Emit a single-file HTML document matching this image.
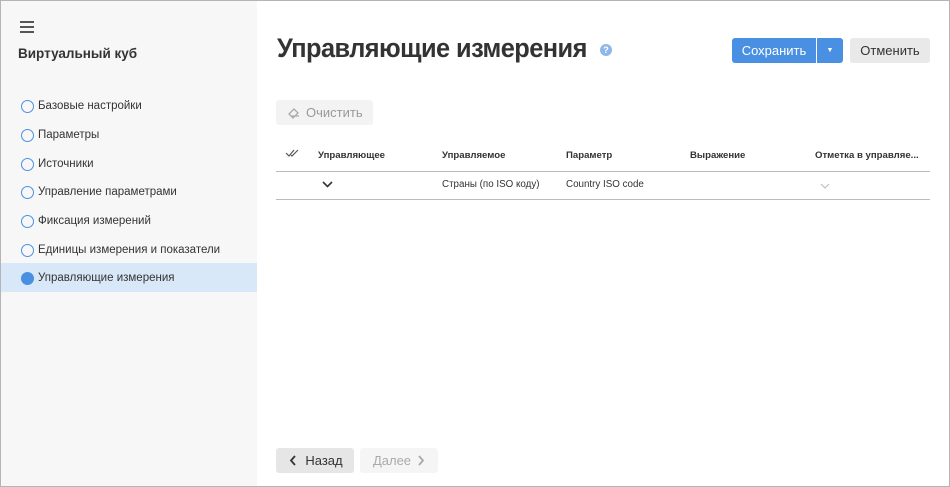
<!DOCTYPE html>
<html><head><meta charset="utf-8"><style>
*{box-sizing:border-box;margin:0;padding:0}
body{width:950px;height:487px;overflow:hidden;font-family:"Liberation Sans",sans-serif;color:#333;background:#fff}
.frame{position:absolute;left:0;top:0;width:950px;height:487px;border:1px solid #b4b4b4}
.side{position:absolute;left:1px;top:1px;width:256px;height:485px;background:#f7f7f7}
.burger{position:absolute;left:19px;top:20px;width:14px}
.burger i{display:block;height:2px;background:#555;margin-bottom:3px}
.stitle{position:absolute;left:17px;top:45px;font-size:13.5px;font-weight:bold;color:#333}
.item{position:absolute;left:0;width:256px;height:29px;font-size:11.5px;color:#333;line-height:31px;padding-left:37px}
.item:before{content:"";position:absolute;left:20px;top:9px;width:11px;height:11px;border:1.3px solid #4a90e2;border-radius:50%}
.item.act{background:#d9e8f9}
.item.act:before{background:#4a90e2}
h1{position:absolute;left:277px;top:33px;font-size:27px;font-weight:bold;color:#333;letter-spacing:-0.6px;transform:scaleX(0.94);transform-origin:left}
.help{position:absolute;left:600px;top:44px;width:12px;height:12px;border-radius:50%;background:#8fb8ea;color:#fff;font-size:9px;font-weight:bold;text-align:center;line-height:12px}
.btn{position:absolute;height:25px;font-size:13px;line-height:25px;text-align:center;border-radius:3px}
.save{left:732px;top:38px;width:84px;background:#4a90e2;color:#fff;border-radius:3px 0 0 3px}
.dd{left:817px;top:38px;width:26px;background:#4a90e2;color:#fff;font-size:7px;border-radius:0 3px 3px 0}
.cancel{left:850px;top:38px;width:80px;background:#e9e9e9;color:#333}
.clear{left:276px;top:100px;width:97px;background:#f3f3f3;color:#999;text-align:left;padding-left:30px}
.th{position:absolute;top:150px;font-size:9.6px;font-weight:bold;color:#333}
.td{position:absolute;top:179px;font-size:9.8px;color:#333}
.line{position:absolute;left:276px;width:654px;height:1px;background:#bbb}
.back{left:276px;top:448px;width:78px;background:#e6e6e6;color:#333;padding-left:18px}
.next{left:360px;top:448px;width:78px;background:#f5f5f5;color:#aaa;padding-right:14px}
</style></head><body>
<div class="side">
<div class="burger"><i></i><i></i><i></i></div>
<div class="stitle">Виртуальный куб</div>
<div class="item" style="top:90px">Базовые настройки</div>
<div class="item" style="top:119px">Параметры</div>
<div class="item" style="top:148px">Источники</div>
<div class="item" style="top:176px">Управление параметрами</div>
<div class="item" style="top:205px">Фиксация измерений</div>
<div class="item" style="top:234px">Единицы измерения и показатели</div>
<div class="item act" style="top:262px">Управляющие измерения</div>
</div>
<h1>Управляющие измерения</h1>
<div class="help">?</div>
<div class="btn save">Сохранить</div>
<div class="btn dd">▼</div>
<div class="btn cancel">Отменить</div>
<div class="btn clear"><svg style="position:absolute;left:11px;top:6px" width="13" height="13" viewBox="0 0 13 13"><path d="M2 8 L7 3 L11 7 L6 12 Z M4 10 H12" fill="none" stroke="#aaa" stroke-width="1.3"/></svg>Очистить</div>
<svg style="position:absolute;left:285px;top:148px" width="16" height="10" viewBox="0 0 16 10"><path d="M1 5 L4 8 L9 2 M6 7 L7 8 L13 2" fill="none" stroke="#555" stroke-width="1.2"/></svg>
<div class="th" style="left:318px">Управляющее</div>
<div class="th" style="left:442px">Управляемое</div>
<div class="th" style="left:566px">Параметр</div>
<div class="th" style="left:690px">Выражение</div>
<div class="th" style="left:815px">Отметка в управляе...</div>
<div class="line" style="top:171px"></div>
<svg style="position:absolute;left:322px;top:181px" width="11" height="7" viewBox="0 0 11 7"><path d="M1 1 L5.5 5.5 L10 1" fill="none" stroke="#333" stroke-width="1.6"/></svg>
<div class="td" style="left:442px">Страны (по ISO коду)</div>
<div class="td" style="left:566px">Country ISO code</div>
<svg style="position:absolute;left:820px;top:183px" width="10" height="6" viewBox="0 0 10 6"><path d="M1 1 L5 5 L9 1" fill="none" stroke="#bbb" stroke-width="1"/></svg>
<div class="line" style="top:199px"></div>
<div class="btn back"><svg style="position:absolute;left:13px;top:7px" width="8" height="11" viewBox="0 0 8 11"><path d="M6 1 L2 5.5 L6 10" fill="none" stroke="#333" stroke-width="1.8"/></svg>Назад</div>
<div class="btn next">Далее<svg style="position:absolute;left:57px;top:7px" width="8" height="11" viewBox="0 0 8 11"><path d="M2 1 L6 5.5 L2 10" fill="none" stroke="#aaa" stroke-width="1.8"/></svg></div>
<div class="frame"></div>
</body></html>
